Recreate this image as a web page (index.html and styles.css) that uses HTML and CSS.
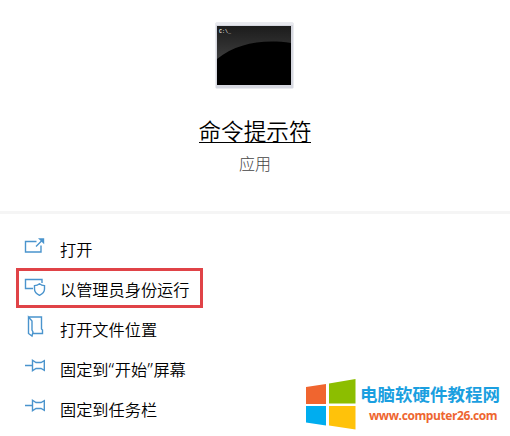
FILE: index.html
```
<!DOCTYPE html>
<html lang="zh-CN">
<head>
    <meta charset="UTF-8">
    <title>命令提示符</title>
    <link rel="stylesheet" href="styles.css">
</head>
<body>
    <div class="header">
        <svg class="app-icon" width="80" height="68" viewBox="0 0 80 68">
            <defs>
                <linearGradient id="gloss" x1="0" y1="0" x2="0" y2="1">
                    <stop offset="0" stop-color="#1c1c1c"/>
                    <stop offset="1" stop-color="#3c3c3c"/>
                </linearGradient>
            </defs>
            <rect x="0.5" y="0.5" width="78" height="66" rx="1" fill="#d6d8e0"/>
            <rect x="1" y="1" width="77" height="2" fill="#e8e9ee"/>
            <rect x="2" y="4" width="74" height="59" fill="#000"/>
            <path d="M2 4h74v17C48 17 22 21 2 37z" fill="url(#gloss)"/>
            <text class="prompt" x="4" y="11">C:\_</text>
        </svg>
        <div class="title">命令提示符</div>
        <div class="subtitle">应用</div>
    </div>

    <div class="menu">
        <div class="item">
            <svg class="icon" width="24" height="24" viewBox="0 0 24 24">
                <path d="M13.500 4.500H2.500v10.500h15.500V8.500M13 9.500 19 3.500"/>
                <path class="solid" d="M15 1.200H21.200v6z"/>
            </svg>
            <span class="label">打开</span>
        </div>
        <div class="item active">
            <svg class="icon" width="24" height="24" viewBox="0 0 24 24">
                <path d="M10 11.500H2.500v-9h16.500V6M16.500 6.800c1.500 1.200 3 1.700 5 1.800v3.400c0 3-1.800 4.800-5 6.300-3.200-1.500-5-3.300-5-6.300v-3.400c2-.1 3.500-.6 5-1.800z"/>
            </svg>
            <span class="label">以管理员身份运行</span>
        </div>
        <div class="item">
            <svg class="icon" width="24" height="24" viewBox="0 0 24 24">
                <path d="M5.500 0h13v12l1 1v3.500H10M5.500 0v16.500l3.500 2.500 1-4-1-2V4z"/>
            </svg>
            <span class="label">打开文件位置</span>
        </div>
        <div class="item">
            <svg class="icon" width="24" height="24" viewBox="0 0 24 24">
                <path d="M2 8.500h7.500M9.500 3.200v10.600l3.500-2.300h5l3.300 1.800V3.700L18 5.500h-5z"/>
            </svg>
            <span class="label">固定到<span class="quote">“</span>开始<span class="quote">”</span>屏幕</span>
        </div>
        <div class="item">
            <svg class="icon" width="24" height="24" viewBox="0 0 24 24">
                <path d="M2 8.500h7.500M9.500 3.200v10.600l3.500-2.300h5l3.300 1.800V3.700L18 5.500h-5z"/>
            </svg>
            <span class="label">固定到任务栏</span>
        </div>
    </div>

    <div class="watermark">
        <svg width="50" height="51" viewBox="0 0 50 51">
            <path d="M0 8 20 5v20H0z" fill="#f0652f"/>
            <path d="M23 4.500 49.500 0v24.500H23z" fill="#8cbe00"/>
            <path d="M0 27h20v19.500L0 43.500z" fill="#00adef"/>
            <path d="M23 27h26.500v23.500L23 46.500z" fill="#ffc20a"/>
        </svg>
        <div class="site">
            <div class="site-name">电脑软硬件教程网</div>
            <div class="site-url">www.computer26.com</div>
        </div>
    </div>
</body>
</html>
```
FILE: styles.css
```
body {
    margin: 0;
    height: 436px;
    position: relative;
    overflow: hidden;
    background-color: #fff;
    color: #000;
    font-family: "Noto Sans CJK SC", sans-serif;
}
.header {
    box-sizing: border-box;
    height: 214px;
    padding-top: 22px;
    display: flex;
    flex-direction: column;
    align-items: center;
    border-bottom: 3px solid #f5f5f5;
}
.app-icon {
    display: block;
}
.prompt {
    fill: #ddd;
    font: bold 5px "Liberation Mono", monospace;
}
.title {
    margin-top: 27px;
    height: 25px;
    line-height: 28px;
    font-size: 22.600px;
    font-weight: 350;
    border-bottom: 1px solid #000;
}
.subtitle {
    margin-top: 9px;
    font-size: 16px;
    line-height: 22px;
    font-weight: 300;
    color: #444;
}
.menu {
    padding: 14px 0 0 16px;
}
.item {
    box-sizing: border-box;
    width: 187px;
    height: 40px;
    padding-left: 7px;
    display: flex;
    align-items: center;
    font-size: 16.200px;
    font-weight: 350;
    line-height: 24px;
    white-space: nowrap;
    border: 0 solid #e04347;
}
.item.active {
    padding-left: 4px;
    border-width: 3px;
}
.label {
    padding-top: 1px;
}
.quote {
    font-family: "Noto Sans", sans-serif;
    font-size: 18px;
    line-height: 1;
    letter-spacing: 0.600px;
}
.icon {
    flex: none;
    margin: 2px 13px 0 0;
    overflow: visible;
    fill: none;
    stroke: #4a94cd;
    stroke-width: 1.400;
}
.solid {
    fill: #4a94cd;
    stroke: none;
}
.watermark {
    position: absolute;
    left: 306px;
    top: 379px;
    display: flex;
}
.site {
    margin-left: 4px;
}
.site-name {
    margin-top: 3px;
    font-size: 17.500px;
    line-height: 24px;
    font-weight: 700;
    color: #1b9fe0;
    white-space: nowrap;
}
.site-url {
    margin: 2px 0 0 9px;
    font: bold 12px/16px "Open Sans", sans-serif;
    letter-spacing: -0.400px;
    color: #ee6630;
}
```
